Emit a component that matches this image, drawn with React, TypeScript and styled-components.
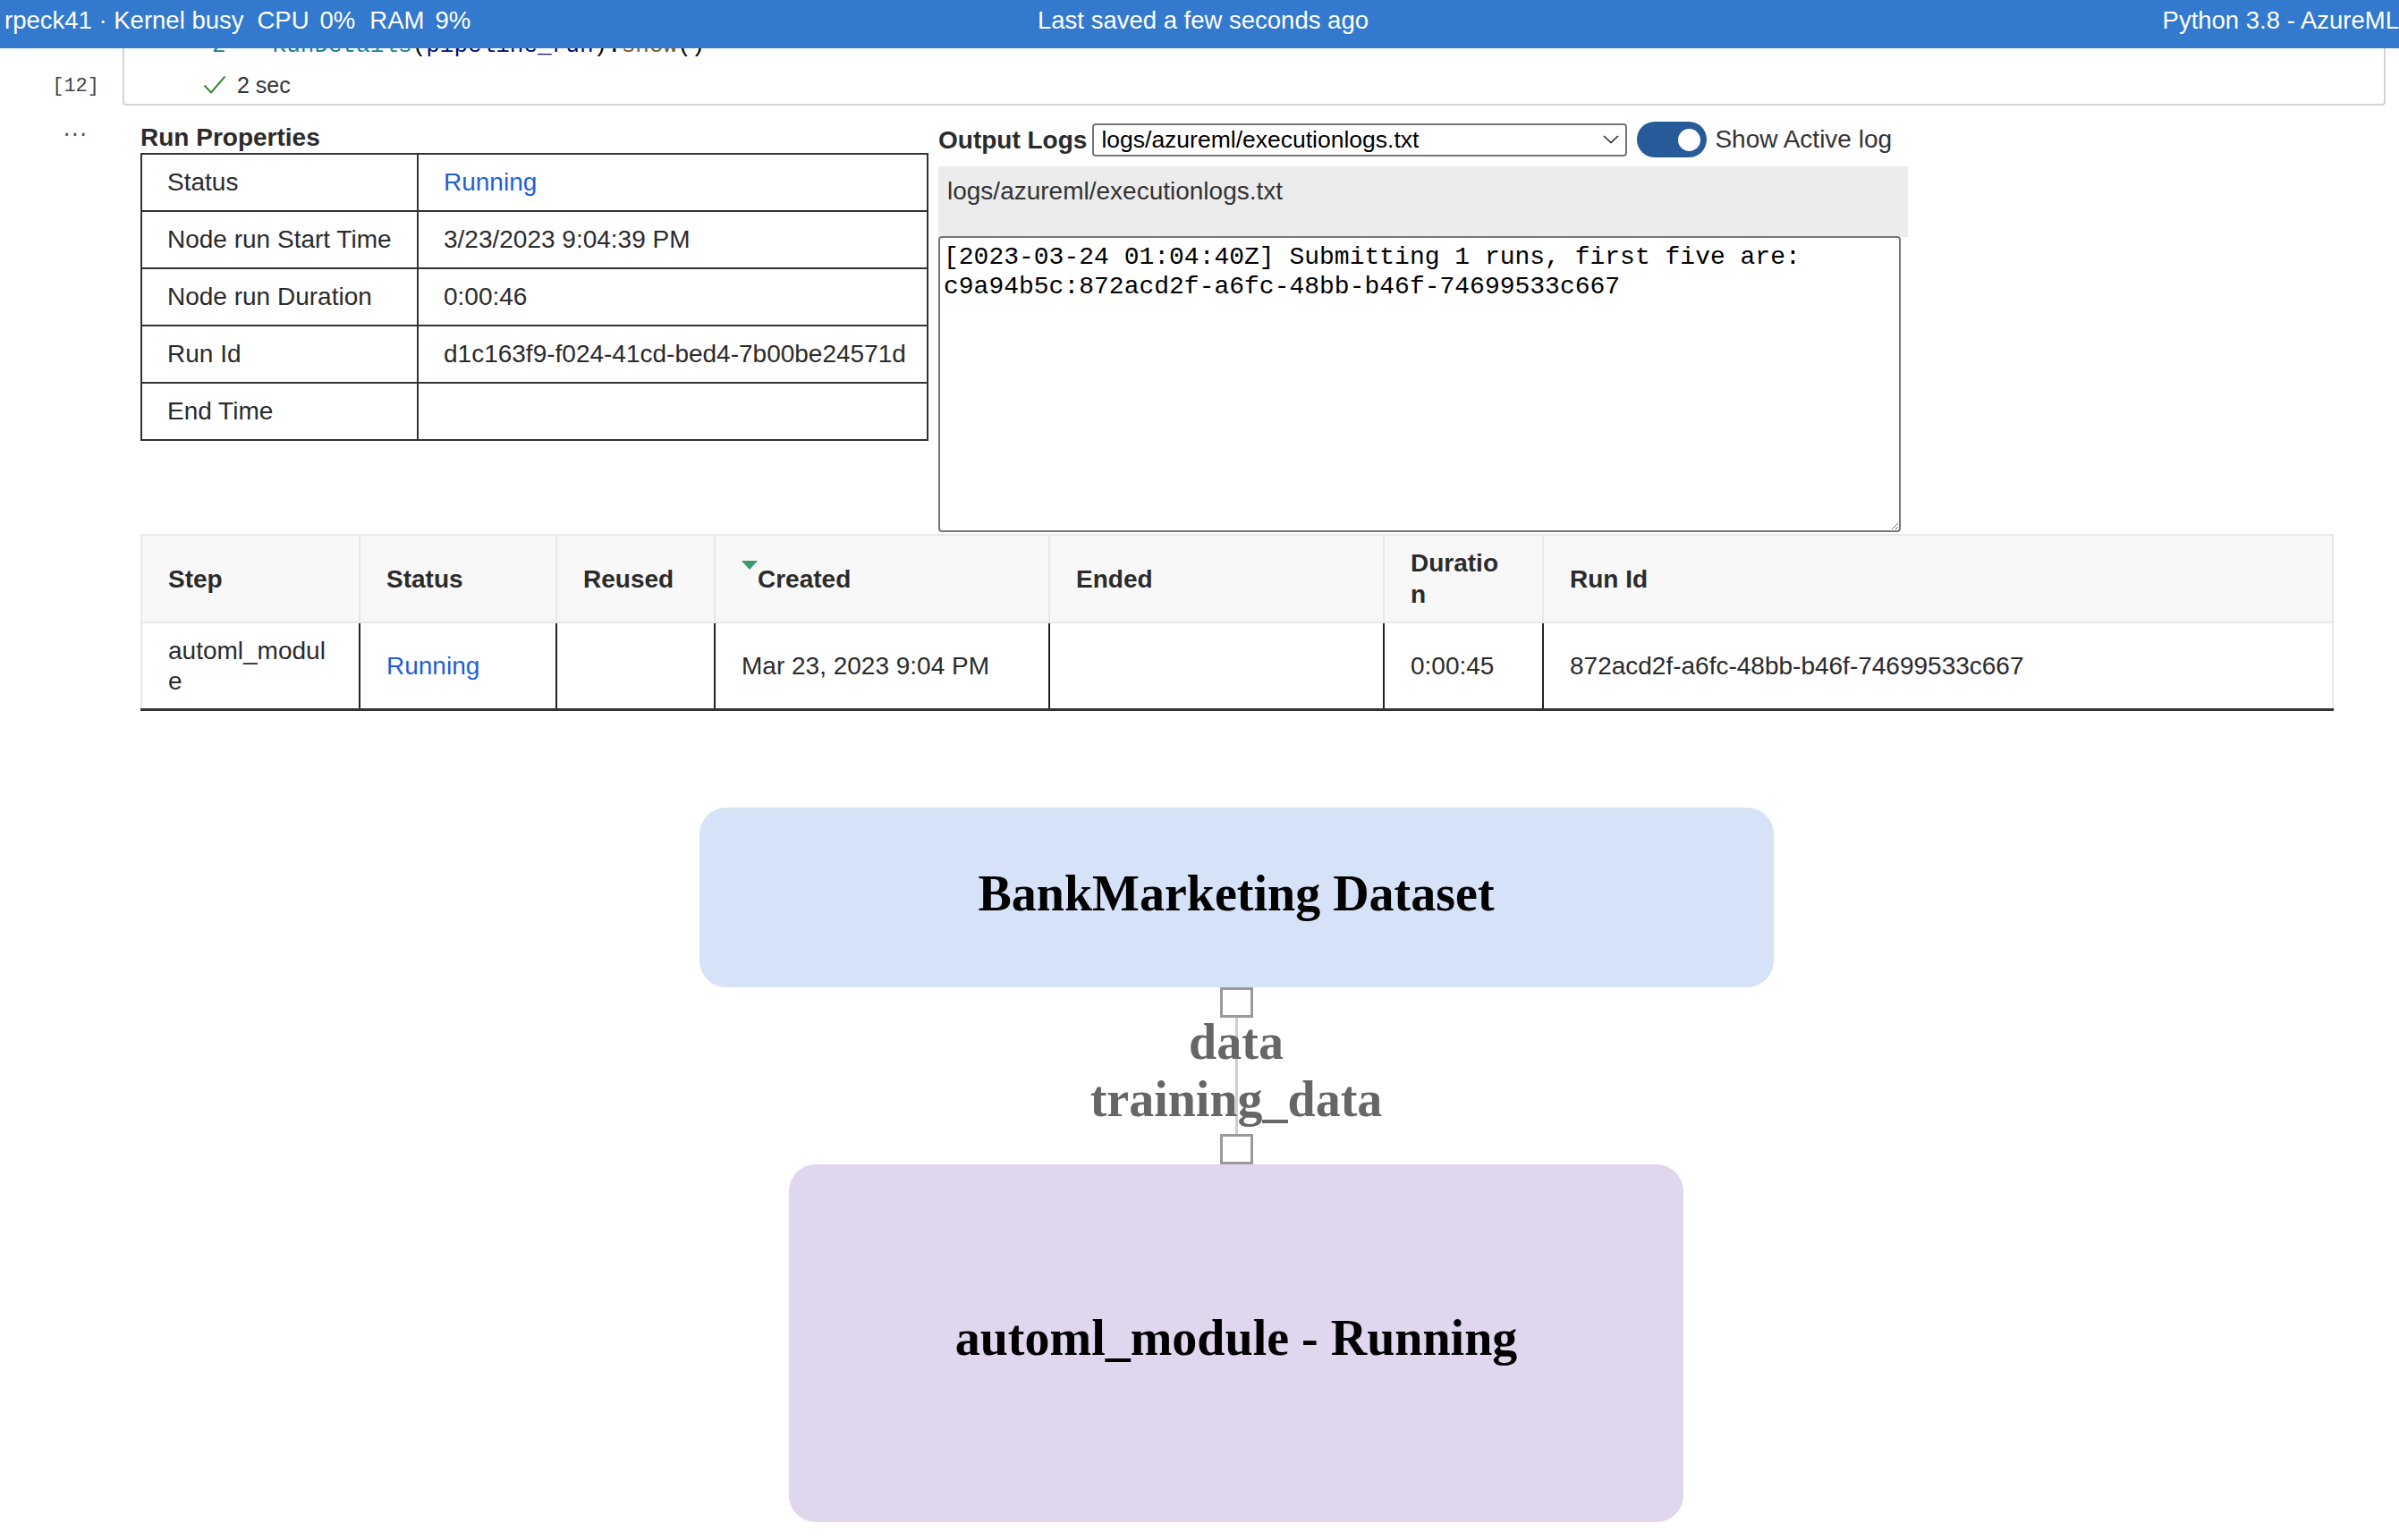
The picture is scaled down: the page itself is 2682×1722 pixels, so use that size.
import styled, { createGlobalStyle } from 'styled-components'

const Global = createGlobalStyle`
  html, body {
    margin: 0;
    padding: 0;
    background: #fff;
    overflow: hidden;
  }
  body {
    font-family: "Liberation Sans", Arial, sans-serif;
    color: #2b2b2b;
  }
`

const TopBar = styled('header')`
  position: fixed;
  top: 0;
  left: 0;
  right: 0;
  height: 54px;
  background: #3379cd;
  color: #fff;
  font-size: 27.5px;
  line-height: 46px;
  display: grid;
  grid-template-columns: 1fr auto 1fr;
  white-space: nowrap;
  z-index: 10;
`

const BarLeft = styled('div')`
  padding-left: 5px;
  display: flex;
`

const BarItem = styled('span')<{ $gap?: number }>`
  margin-left: ${(p) => p.$gap ?? 0}px;
`

const BarCenter = styled('div')`
  padding-left: 8px;
`

const BarRight = styled('div')`
  justify-self: end;
  overflow: hidden;
`

const Notebook = styled('main')`
  display: flex;
  flex-direction: column;
`

const CellRow = styled('div')`
  display: grid;
  grid-template-columns: 137px 1fr;
  padding-right: 15px;
`

const Prompt = styled('div')`
  font-family: "Liberation Mono", monospace;
  font-size: 22px;
  color: #444;
  text-align: right;
  padding-right: 26px;
  padding-top: 80px;
  line-height: 34px;
`

const CellBox = styled('div')`
  border: 2px solid #d4d4d4;
  border-radius: 0 0 4px 4px;
  padding: 31px 0 3px;
`

const CodeLine = styled('div')`
  display: flex;
  padding-left: 98px;
  font-family: "Liberation Mono", monospace;
  font-size: 26px;
  line-height: 36px;
  white-space: pre;
`

const LineNo = styled('span')`
  color: #237893;
`

const Code = styled('span')`
  margin-left: 52px;
`

const Tok = styled('span')<{ $c: string }>`
  color: ${(p) => p.$c};
`

const ExecStatus = styled('div')`
  margin-top: 8px;
  display: flex;
  align-items: center;
  gap: 12px;
  padding-left: 88px;
  height: 36px;
  font-size: 25px;
  color: #333;
`

const OutputRow = styled('div')`
  display: grid;
  grid-template-columns: 157px 2450px;
`

const OutPrompt = styled('div')`
  padding-left: 68px;
  padding-top: 16px;
  font-family: "Liberation Mono", monospace;
  font-size: 22px;
  line-height: 35px;
  letter-spacing: -4px;
  color: #555;
`

const OutputArea = styled('div')`
  padding-top: 18px;
  display: flex;
  flex-direction: column;
`

const TopSection = styled('div')`
  display: flex;
  align-items: flex-start;
  gap: 11px;
`

const PropsPanel = styled('section')`
  width: 881px;
`

const SectionTitle = styled('div')`
  font-size: 28px;
  font-weight: 700;
  line-height: 35px;
  color: #2b2b2b;
  white-space: nowrap;
`

const PropsTable = styled('table')`
  width: 881px;
  border-collapse: collapse;
  table-layout: fixed;
  font-size: 28px;

  td {
    border: 2px solid #333;
    height: 62px;
    padding: 0 28px;
    white-space: nowrap;
  }
`

const Running = styled('span')`
  color: #1f5fd6;
`

const LogsPanel = styled('section')`
  width: 1084px;
  display: flex;
  flex-direction: column;
`

const LogsHeader = styled('div')`
  display: flex;
  align-items: center;
  height: 40px;
`

const SelectBox = styled('div')`
  margin-left: 6px;
  width: 598px;
  height: 37px;
  box-sizing: border-box;
  border: 2px solid #767676;
  border-radius: 4px;
  padding: 0 7px 0 8px;
  display: flex;
  align-items: center;
  justify-content: space-between;
  font-size: 26.5px;
  color: #000;
  background: #fff;
`

const Toggle = styled('div')`
  margin-left: 11px;
  width: 78px;
  height: 40px;
  border-radius: 20px;
  background: #275a99;
  display: flex;
  align-items: center;
  justify-content: flex-end;
  padding-right: 7px;
  box-sizing: border-box;
`

const Knob = styled('span')`
  width: 25px;
  height: 25px;
  border-radius: 50%;
  background: #fff;
`

const ToggleLabel = styled('span')`
  margin-left: 9px;
  font-size: 28px;
  color: #333;
  white-space: nowrap;
`

const LogPath = styled('div')`
  margin-top: 10px;
  height: 79px;
  box-sizing: border-box;
  background: #ececec;
  padding: 11px 10px 0;
  font-size: 28px;
  line-height: 34px;
  color: #333;
`

const LogText = styled('textarea')`
  margin-top: -1px;
  width: 1076px;
  height: 331px;
  box-sizing: border-box;
  border: 2px solid #767676;
  border-radius: 4px;
  padding: 5px 4px 4px;
  font-family: "Liberation Mono", "Courier New", monospace;
  font-size: 28px;
  line-height: 33px;
  color: #000;
  background: #fff;
  resize: both;
  outline: none;
  overflow: hidden;
`

const StepTable = styled('table')`
  margin-top: 2px;
  width: 2450px;
  border-collapse: collapse;
  table-layout: fixed;
  font-size: 28px;

  th {
    background: #f8f8f8;
    border: 2px solid #e8e8e8;
    height: 96px;
    padding: 0 29px;
    text-align: left;
    font-weight: 700;
    line-height: 35px;
    color: #2b2b2b;
    word-break: break-all;
  }

  td {
    border-left: 2px solid #222;
    border-right: 2px solid #222;
    border-bottom: 3px solid #333;
    height: 95px;
    padding: 0 29px;
    line-height: 34px;
    word-break: break-all;
  }

  td:first-child {
    border-left-color: #e8e8e8;
  }

  td:last-child {
    border-right-color: #e8e8e8;
  }
`

const NarrowTh = styled('th')`
  && {
    padding-right: 40px;
  }
`

const SortMark = styled('svg')`
  vertical-align: top;
  margin-top: -3px;
`

const Graph = styled('div')`
  margin-top: 108px;
  display: flex;
  flex-direction: column;
  align-items: center;
  font-family: "Liberation Serif", "Times New Roman", serif;
  font-weight: 700;
`

const NodeBox = styled('div')<{ $bg: string; $w: number; $h: number; $shift: number }>`
  width: ${(p) => p.$w}px;
  height: ${(p) => p.$h}px;
  box-sizing: border-box;
  background: ${(p) => p.$bg};
  border-radius: 30px;
  display: flex;
  align-items: center;
  justify-content: center;
  padding-bottom: ${(p) => p.$shift}px;
  font-size: 56px;
  line-height: 56px;
  color: #000;
  white-space: nowrap;
`

const Port = styled('div')`
  width: 37px;
  height: 34px;
  box-sizing: border-box;
  border: 3px solid #9a9a9a;
  background: #fff;
`

const Edge = styled('div')`
  position: relative;
  height: 130px;
  width: 500px;
  display: flex;
  flex-direction: column;
  align-items: center;

  &::before {
    content: '';
    position: absolute;
    top: 0;
    bottom: 0;
    left: 50%;
    width: 3px;
    margin-left: -1px;
    background: #cfcfcf;
  }
`

const EdgeLabel = styled('div')<{ $first?: boolean }>`
  position: relative;
  margin-top: ${(p) => (p.$first ? -5 : 0)}px;
  font-size: 56px;
  line-height: 64px;
  color: #666;
  white-space: nowrap;
`

function Chevron() {
  return (
    <svg width="18" height="10" viewBox="0 0 18 10">
      <path d="M1 1 L9 8.5 L17 1" fill="none" stroke="#222" strokeWidth="1.6" />
    </svg>
  )
}

function CheckMark() {
  return (
    <svg width="26" height="22" viewBox="0 0 26 22">
      <path d="M1.5 11.5 L9 19.5 L24.5 1.5" fill="none" stroke="#388a34" strokeWidth="2" />
    </svg>
  )
}

const props = [
  ['Status', <Running>Running</Running>],
  ['Node run Start Time', '3/23/2023 9:04:39 PM'],
  ['Node run Duration', '0:00:46'],
  ['Run Id', 'd1c163f9-f024-41cd-bed4-7b00be24571d'],
  ['End Time', ''],
] as const

const colWidths = [244, 220, 177, 374, 374, 178, 883]

export default function App() {
  return (
    <>
      <Global />
      <TopBar>
        <BarLeft>
          <BarItem>rpeck41 · Kernel busy</BarItem>
          <BarItem $gap={15}>CPU</BarItem>
          <BarItem $gap={12}>0%</BarItem>
          <BarItem $gap={16}>RAM</BarItem>
          <BarItem $gap={12}>9%</BarItem>
        </BarLeft>
        <BarCenter>Last saved a few seconds ago</BarCenter>
        <BarRight>Python 3.8 - AzureML</BarRight>
      </TopBar>
      <Notebook>
        <CellRow>
          <Prompt>[12]</Prompt>
          <CellBox>
            <CodeLine>
              <LineNo>2</LineNo>
              <Code>
                <Tok $c="#267f99">RunDetails</Tok>
                <Tok $c="#000">(</Tok>
                <Tok $c="#001080">pipeline_run</Tok>
                <Tok $c="#000">).</Tok>
                <Tok $c="#795e26">show</Tok>
                <Tok $c="#000">()</Tok>
              </Code>
            </CodeLine>
            <ExecStatus>
              <CheckMark />
              <span>2 sec</span>
            </ExecStatus>
          </CellBox>
        </CellRow>
        <OutputRow>
          <OutPrompt>···</OutPrompt>
          <OutputArea>
            <TopSection>
              <PropsPanel>
                <SectionTitle>Run Properties</SectionTitle>
                <PropsTable>
                  <colgroup>
                    <col style={{ width: 309 }} />
                    <col />
                  </colgroup>
                  <tbody>
                    {props.map(([k, v]) => (
                      <tr key={k}>
                        <td>{k}</td>
                        <td>{v}</td>
                      </tr>
                    ))}
                  </tbody>
                </PropsTable>
              </PropsPanel>
              <LogsPanel>
                <LogsHeader>
                  <SectionTitle>Output Logs</SectionTitle>
                  <SelectBox>
                    <span>logs/azureml/executionlogs.txt</span>
                    <Chevron />
                  </SelectBox>
                  <Toggle>
                    <Knob />
                  </Toggle>
                  <ToggleLabel>Show Active log</ToggleLabel>
                </LogsHeader>
                <LogPath>logs/azureml/executionlogs.txt</LogPath>
                <LogText
                  readOnly
                  spellCheck={false}
                  defaultValue={
                    '[2023-03-24 01:04:40Z] Submitting 1 runs, first five are:\nc9a94b5c:872acd2f-a6fc-48bb-b46f-74699533c667'
                  }
                />
              </LogsPanel>
            </TopSection>
            <StepTable>
              <colgroup>
                {colWidths.map((w, i) => (
                  <col key={i} style={{ width: w }} />
                ))}
              </colgroup>
              <thead>
                <tr>
                  <th>Step</th>
                  <th>Status</th>
                  <th>Reused</th>
                  <th>
                    <SortMark width="18" height="10" viewBox="0 0 18 10">
                      <path d="M0 0 H18 L9 10 Z" fill="#3a9a6a" />
                    </SortMark>
                    Created
                  </th>
                  <th>Ended</th>
                  <NarrowTh>Duration</NarrowTh>
                  <th>Run Id</th>
                </tr>
              </thead>
              <tbody>
                <tr>
                  <td>automl_module</td>
                  <td>
                    <Running>Running</Running>
                  </td>
                  <td></td>
                  <td>Mar 23, 2023 9:04 PM</td>
                  <td></td>
                  <td>0:00:45</td>
                  <td>872acd2f-a6fc-48bb-b46f-74699533c667</td>
                </tr>
              </tbody>
            </StepTable>
            <Graph>
              <NodeBox $bg="#d6e2f7" $w={1201} $h={201} $shift={10}>
                BankMarketing Dataset
              </NodeBox>
              <Port />
              <Edge>
                <EdgeLabel $first>data</EdgeLabel>
                <EdgeLabel>training_data</EdgeLabel>
              </Edge>
              <Port />
              <NodeBox $bg="#e0d7ee" $w={1000} $h={400} $shift={12}>
                automl_module - Running
              </NodeBox>
            </Graph>
          </OutputArea>
        </OutputRow>
      </Notebook>
    </>
  )
}
